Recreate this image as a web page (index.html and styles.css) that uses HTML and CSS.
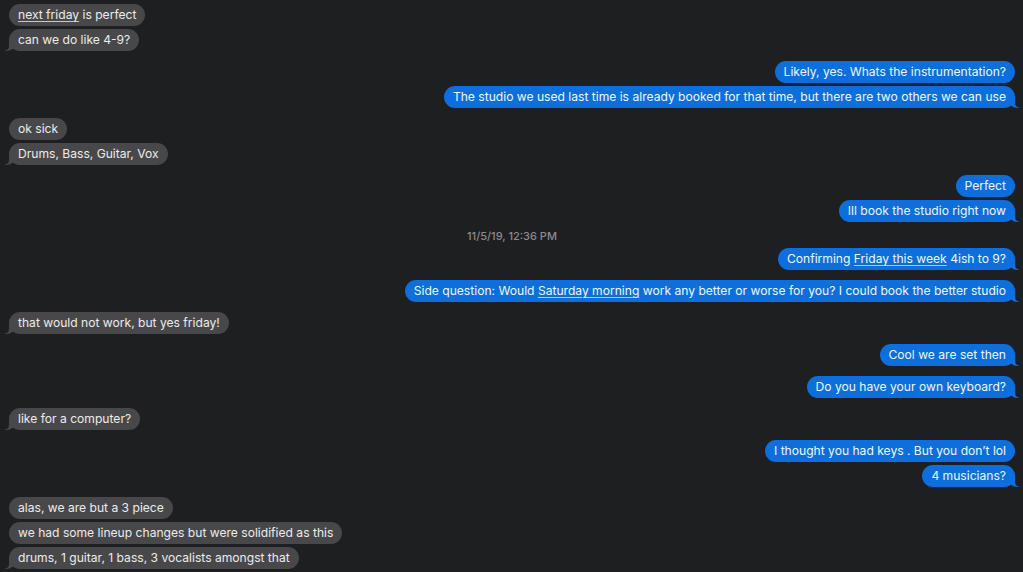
FILE: index.html
```html
<!DOCTYPE html>
<html>
<head>
    <title>Messages</title>
    <link rel="stylesheet" href="styles.css">
</head>
<body>
    <div class="thread">
        <div class="group in">
            <div class="bubble"><span class="link">next friday</span> is perfect</div>
            <div class="bubble tail">can we do like 4-9?</div>
        </div>
        <div class="group out">
            <div class="bubble">Likely, yes. Whats the instrumentation?</div>
            <div class="bubble tail">The studio we used last time is already booked for that time, but there are two others we can use</div>
        </div>
        <div class="group in">
            <div class="bubble">ok sick</div>
            <div class="bubble tail">Drums, Bass, Guitar, Vox</div>
        </div>
        <div class="group out">
            <div class="bubble">Perfect</div>
            <div class="bubble tail">Ill book the studio right now</div>
        </div>

        <div class="stamp">11/5/19, 12:36 PM</div>

        <div class="group out">
            <div class="bubble tail">Confirming <span class="link">Friday this week</span> 4ish to 9?</div>
        </div>
        <div class="group out">
            <div class="bubble tail">Side question: Would <span class="link">Saturday morning</span> work any better or worse for you? I could book the better studio</div>
        </div>
        <div class="group in">
            <div class="bubble tail">that would not work, but yes friday!</div>
        </div>
        <div class="group out">
            <div class="bubble tail">Cool we are set then</div>
        </div>
        <div class="group out">
            <div class="bubble tail">Do you have your own keyboard?</div>
        </div>
        <div class="group in">
            <div class="bubble tail">like for a computer?</div>
        </div>
        <div class="group out">
            <div class="bubble">I thought you had keys . But you don’t lol</div>
            <div class="bubble tail">4 musicians?</div>
        </div>
        <div class="group in">
            <div class="bubble">alas, we are but a 3 piece</div>
            <div class="bubble">we had some lineup changes but were solidified as this</div>
            <div class="bubble tail">drums, 1 guitar, 1 bass, 3 vocalists amongst that</div>
        </div>
    </div>
</body>
</html>
```

FILE: styles.css
```css
html, body {
    margin: 0;
    background-color: #1e1f21;
    height: 100%;
    overflow: hidden;
}
.thread {
    padding: 4px 8px 0 9px;
    font-family: Inter, "Liberation Sans", sans-serif;
    font-size: 12.1px;
}
.group {
    display: flex;
    flex-direction: column;
    gap: 3px;
    margin-top: 10px;
}
.group:first-child {
    margin-top: 0;
}
.group.in {
    align-items: flex-start;
}
.group.out {
    align-items: flex-end;
}
.bubble {
    position: relative;
    height: 22px;
    line-height: 22px;
    padding: 0 9px;
    border-radius: 11px;
    white-space: nowrap;
}
.in .bubble {
    background-color: #48484a;
    color: #ececec;
}
.out .bubble {
    background-color: #0b6fe0;
    color: #f5f7fa;
}
.link {
    text-decoration: underline;
    text-decoration-thickness: 1px;
    text-underline-offset: 2px;
    text-decoration-color: rgba(255,255,255,0.7);
}

/* bubble tails */
.bubble.tail::before,
.bubble.tail::after {
    content: "";
    position: absolute;
    bottom: 0;
    height: 11px;
}
.in .bubble.tail::before {
    left: -5px;
    width: 12px;
    background-color: #48484a;
    border-bottom-right-radius: 9px;
}
.in .bubble.tail::after {
    left: -7px;
    width: 7px;
    background-color: #1e1f21;
    border-bottom-right-radius: 5px;
}
.out .bubble.tail::before {
    right: -5px;
    width: 12px;
    background-color: #0b6fe0;
    border-bottom-left-radius: 9px;
}
.out .bubble.tail::after {
    right: -7px;
    width: 7px;
    background-color: #1e1f21;
    border-bottom-left-radius: 5px;
}

.stamp {
    margin-top: 7px;
    line-height: 14px;
    text-align: center;
    font-size: 11px;
    font-weight: 500;
    color: #8b8b90;
}
.stamp + .group {
    margin-top: 5px;
}
```
